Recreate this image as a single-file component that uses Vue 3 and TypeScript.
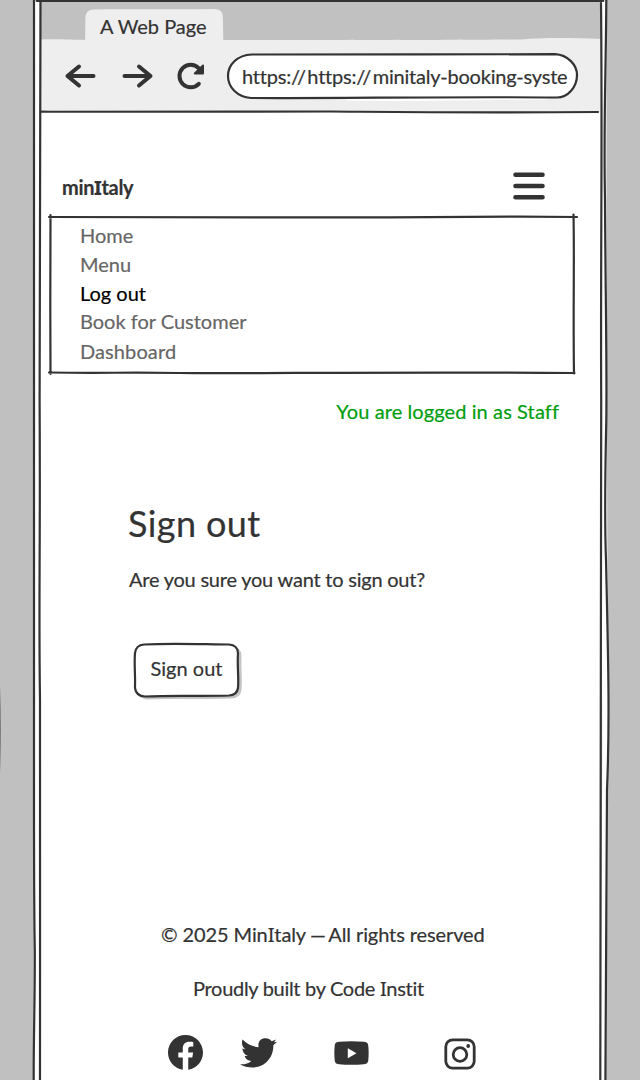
<script setup lang="ts">
interface NavItem {
  label: string
  name: string
}

const navItems: NavItem[] = [
  { label: 'Home', name: 'home' },
  { label: 'Menu', name: 'dishes' },
  { label: 'Log out', name: 'logout' },
  { label: 'Book for Customer', name: 'book' },
  { label: 'Dashboard', name: 'dashboard' },
]
const current = 'logout'
</script>

<template>
  <div class="desk">
    <div class="browser">
      <div class="tabs">
        <svg class="tab-shape" viewBox="0 0 560 38" preserveAspectRatio="none">
          <path d="M0 36.500C20 36 34 37 45 37L45.300 16Q45 7 53 6.500C90 5.500 130 7 175 6Q182.500 6.500 182.500 14L183 37C300 37.500 440 37 480 36.500C500 34.500 530 34.500 560 36V38H0Z" />
        </svg>
        <span class="tab-title">A Web Page</span>
      </div>
      <div class="toolbar">
        <svg class="tool back" viewBox="0 0 32 28"><path d="M29.500 14H4M15 4.500 3.500 14 15 23.500" /></svg>
        <svg class="tool forward" viewBox="0 0 32 28"><path d="M2.500 14H28M17 4.500 28.500 14 17 23.500" /></svg>
        <svg class="tool reload" viewBox="0 0 32 28">
          <path d="M23.800 21.800A11.200 11.200 0 1 1 23.600 6.100" />
          <path class="solid" d="M28 3.500V11.500H19.800Z" />
        </svg>
        <div class="address">
          <svg class="sketch" viewBox="0 0 352 46">
            <path class="glow" d="M120 46.500C180 47.500 260 46 320 45.500" />
            <path class="pill" d="M25 1.500C100 .8 240 2 328 1.200C341 2 350 12 350 22C350 34 341 44.500 330 44.500C220 43.500 110 45.500 24 45C10 44 1 34 1 23S10 2 25 1.500Z" />
          </svg>
          <span class="url">https:<i>//</i>https:<i>//</i>minitaly-booking-syste</span>
        </div>
      </div>

      <main class="page">
        <header class="header">
          <strong class="brand">min<span class="slab">I</span>taly</strong>
          <svg class="burger" viewBox="0 0 32 28"><path d="M2.500 2.700h27M2.500 14h27M2.500 25.200h27" /></svg>
        </header>

        <nav class="menu">
          <svg class="sketch" viewBox="0 0 530 164">
            <path d="M0 4C90 4 150 3.800 210 4.300S410 4.200 470 3.600L528 4M1.500 2C1.500 50 1 110 1.500 161M524.500 1.500C525.500 50 524 100 525 160.500M0 159.500C60 160.500 70 159 130 160S330 158.500 525.500 160" />
          </svg>
          <a v-for="item in navItems" :key="item.name" class="link" :class="[item.name, { active: item.name === current }]">{{ item.label }}</a>
        </nav>

        <p class="status">You are logged in as Staff</p>

        <section class="signout">
          <h1 class="title">Sign out</h1>
          <p class="question">Are you sure you want to sign out?</p>
          <button class="button" type="button">
            <svg class="sketch" viewBox="0 0 110 58">
              <path class="shadow" d="M13 5C50 4 80 5 99 4.500Q108.500 5 108.500 14C108 30 109.500 38 108.500 48Q107.500 56.500 98 56.500C70 57.500 40 56.500 13 57.500Q5 56 5 48V14Q5 5 13 5Z" />
              <path class="face" d="M11 2.500C40 .9 75 2.500 96 2.500Q104.500 3 105 11C104 25 106 35 105 46Q104 53 96 53.500C70 54.500 40 53 12 54.500Q3 54 2 46C2.500 30 1 24 2 11Q3 3 11 2.500Z" />
            </svg>
            <span>Sign out</span>
          </button>
        </section>

        <footer class="footer">
          <p class="copyright">© 2025 Min<span class="slab">I</span>taly<span class="dash"> — </span>All rights reserved</p>
          <p class="credit">Proudly built by Code <span class="slab">I</span>nstit</p>
          <div class="social">
            <svg class="facebook" viewBox="8 8 496 496"><path d="M504 256C504 119 393 8 256 8S8 119 8 256c0 123.780 90.690 226.380 209.250 245V327.690h-63V256h63v-54.640c0-62.150 37-96.480 93.670-96.480 27.140 0 55.520 4.840 55.520 4.840v61h-31.280c-30.800 0-40.410 19.120-40.410 38.730V256h68.780l-11 71.690h-57.780V501C413.310 482.380 504 379.780 504 256z" /></svg>
            <svg class="twitter" viewBox="0 0 37 30"><path d="M2.600 1.600C6.500 6 12.500 8.700 18.600 9.200C17.500 3.500 21 .2 25.500.3C28.300.3 30.300 1.500 31.700 3.200L36 1.600L34 4.200L37 4L33.300 7.200C33.900 18 26 29.600 12.500 29.500C8 29.500 3.500 28.600 0 26.300C4.500 26.600 8.500 25.600 11.300 23C7.800 22.600 5.500 20.800 4.600 18H7.800C4.500 16.600 2.500 14 2.400 10.600L5.500 11.400C2.300 9 1.100 5 2.600 1.600Z" /></svg>
            <svg class="youtube" viewBox="0 0 35 24"><path d="M5 .8Q17 -.3 30 .8C33.300 1.100 34 2.500 34.300 5Q35 12 34.300 19C34 21.500 33.300 22.900 30 23.200Q17 24.300 5 23.200C1.700 22.900 1 21.500.7 19Q0 12 .7 5C1 2.500 1.700 1.100 5 .8ZM13.800 7.200V17.200L22.500 12.200Z" /></svg>
            <svg class="instagram" viewBox="0 0 32 32">
              <rect x="1.800" y="1.800" width="28.400" height="28.400" rx="7" />
              <circle cx="16" cy="16.500" r="6.800" />
              <circle class="dot" cx="24.200" cy="8" r="1.900" />
            </svg>
          </div>
        </footer>
      </main>
    </div>

    <svg class="frame" viewBox="0 0 640 1080">
      <path class="gap" d="M36.800 3V1080M604 3C602.500 150 604 300 604 440S606 700 605 800S603 1000 603 1080" />
      <path d="M34 0C34 300 33 500 34 700C34 880 33.800 900 34.800 950C35 1000 33.500 1040 33.700 1080M40.500 0C40.500 200 38.800 300 39.600 400C40.500 560 38.500 600 40 700C41 850 39.500 950 40 1080" />
      <path d="M601 3C602.500 150 600.500 250 601.200 400C601 560 601 800 600.300 1080M606.300 0C606 70 603.500 120 605 200C605.500 300 607 360 606.300 420C605 480 604.500 520 606 560C608 650 610 720 607 790C606 850 606.500 950 605.400 1080" />
      <path d="M41 111.700C150 112.500 260 111 330 111.500S460 112.800 598 112" />
      <path class="top" d="M37 .8H603" />
      <path class="edge" d="M0 685Q1.500 730 0 773Z" />
    </svg>
  </div>
</template>

<style>
body {
  margin: 0;
}
</style>

<style scoped>
.desk {
  position: relative;
  width: 640px;
  height: 1080px;
  overflow: hidden;
  background: #c0c0c0;
  color: #333;
  font: 20px/24px Lato, "Liberation Sans", sans-serif;
  font-variant-ligatures: none;
  -webkit-text-stroke: 0.2px currentColor;
  white-space: nowrap;
}

p,
h1 {
  margin: 0;
}

svg {
  display: block;
  flex: none;
  fill: none;
  stroke: #333;
  stroke-width: 2.2;
  stroke-linecap: round;
  stroke-linejoin: round;
}

.frame {
  position: absolute;
  inset: 0;
  width: 640px;
  height: 1080px;
  pointer-events: none;
}

.frame .gap {
  stroke: #fff;
  stroke-width: 6;
}

.frame .top {
  stroke-width: 2.6;
}

.frame .edge {
  fill: #666;
  stroke: none;
}

.browser {
  box-sizing: border-box;
  width: 561px;
  height: 1080px;
  margin-left: 40px;
  background: #fff;
}

.tabs {
  position: relative;
  height: 40px;
  box-sizing: border-box;
  padding: 14px 0 0 60px;
  background: #c1c1c1;
}

.tab-shape {
  position: absolute;
  left: 0;
  bottom: -1px;
  width: 561px;
  height: 38px;
  fill: #eee;
  stroke: none;
}

.tab-title {
  position: relative;
}

.toolbar {
  display: flex;
  box-sizing: border-box;
  height: 72px;
  padding: 13px 0 0 24px;
  background: #eee;
}

.tool {
  width: 32px;
  height: 28px;
  margin-top: 9px;
  stroke-width: 4;
}

.forward {
  margin-left: 26px;
}

.reload {
  margin-left: 21px;
}

.reload .solid {
  fill: #333;
  stroke-width: 2;
}

.address {
  position: relative;
  display: flex;
  align-items: center;
  box-sizing: border-box;
  width: 352px;
  height: 46px;
  margin-left: 20px;
  padding-left: 15px;
}

.sketch {
  position: absolute;
  inset: 0;
  width: 100%;
  height: 100%;
  overflow: visible;
}

.pill {
  fill: #fff;
}

.glow {
  stroke: #fff;
}

.url {
  position: relative;
  letter-spacing: -0.22px;
}

.url i {
  font-style: normal;
  letter-spacing: 1.400px;
}

.page {
  padding-top: 1px;
}

.header {
  display: flex;
  justify-content: space-between;
  box-sizing: border-box;
  height: 100px;
  padding: 58px 56px 0 21px;
}

.brand {
  margin: 4px 0 0 1px;
  font-weight: 700;
  letter-spacing: -0.35px;
}

.slab {
  font-family: "Noto Sans", "DejaVu Sans Mono", monospace;
  line-height: 0;
}

.burger {
  width: 32px;
  height: 28px;
  margin-top: 1px;
  stroke-width: 4.600;
}

.menu {
  position: relative;
  display: flex;
  flex-direction: column;
  box-sizing: border-box;
  width: 530px;
  height: 164px;
  margin-left: 9px;
  padding: 8px 0 0 31px;
}

.link {
  color: #666;
  line-height: 29px;
}

.link.logout {
  line-height: 28px;
}

.link.dashboard {
  line-height: 30px;
  letter-spacing: 0.1px;
}

.link.active {
  color: #000;
}

.status {
  margin: 22px 42px 0 0;
  color: #009e0f;
  letter-spacing: 0.1px;
  text-align: right;
}

.signout {
  display: flex;
  flex-direction: column;
  align-items: flex-start;
  margin: 78px 0 0 88px;
}

.title {
  font-size: 36px;
  font-weight: 400;
  line-height: 44px;
  letter-spacing: 0.4px;
}

.question {
  margin: 22px 0 0 1px;
  letter-spacing: -0.22px;
}

.button {
  position: relative;
  width: 110px;
  height: 58px;
  margin: 51px 0 0 5px;
  padding: 0 3px 6px 0;
  border: 0;
  background: none;
  color: inherit;
  font: inherit;
}

.button span {
  position: relative;
}

.button .shadow {
  fill: #c4c4c4;
  stroke: none;
}

.button .face {
  fill: #fff;
}

.footer {
  margin-top: 222px;
}

.copyright {
  margin-left: 121px;
  letter-spacing: -0.1px;
}

.copyright .dash {
  letter-spacing: -1.300px;
}

.credit {
  margin: 30px 0 0 153px;
  letter-spacing: -0.3px;
}

.social {
  display: flex;
  margin: 35px 0 0 128px;
}

.social svg {
  fill: #333;
  stroke: none;
}

.facebook {
  width: 35px;
  height: 35px;
}

.twitter {
  width: 37px;
  height: 30px;
  margin: 3px 0 0 37px;
}

.youtube {
  width: 35px;
  height: 24px;
  margin: 6px 0 0 57px;
}

.social .instagram {
  width: 32px;
  height: 32px;
  margin: 3px 0 0 75px;
  fill: none;
  stroke: #333;
  stroke-width: 2.800;
}

.instagram .dot {
  fill: #333;
  stroke: none;
}
</style>
